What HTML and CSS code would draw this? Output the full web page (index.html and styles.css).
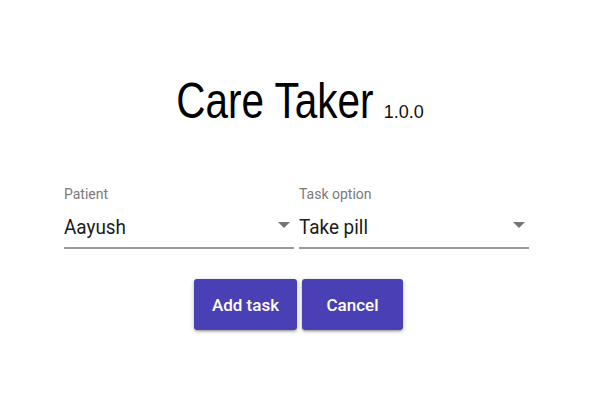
FILE: index.html
```html
<!DOCTYPE html>
<html>
<head>
<meta charset="utf-8">
<link rel="stylesheet" href="styles.css">
</head>
<body>
<div class="app">
  <h1 class="title"><span class="name">Care Taker</span><span class="version">1.0.0</span></h1>
  <div class="form">
    <div class="field field-patient">
      <label class="label">Patient</label>
      <div class="select">
        <span class="value">Aayush</span>
        <span class="arrow"></span>
      </div>
    </div>
    <div class="field field-task">
      <label class="label">Task option</label>
      <div class="select">
        <span class="value">Take pill</span>
        <span class="arrow"></span>
      </div>
    </div>
  </div>
  <div class="actions">
    <button class="btn btn-add">Add task</button>
    <button class="btn btn-cancel">Cancel</button>
  </div>
</div>
</body>
</html>
```
FILE: styles.css
```css
html, body {
  margin: 0;
  padding: 0;
  background: #ffffff;
}
body {
  width: 600px;
  height: 400px;
  font-family: Roboto, "Liberation Sans", sans-serif;
  color: #1a1a1a;
}
.app {
  padding-top: 72px;
}
.title {
  margin: 0;
  display: flex;
  justify-content: center;
  align-items: baseline;
  gap: 10px;
  font-weight: normal;
}
.name {
  display: inline-block;
  font-family: "Liberation Sans", Arial, sans-serif;
  font-size: 50px;
  line-height: 58px;
  color: #000;
  transform: scaleX(0.81);
  transform-origin: center;
  margin: 0 -23px;
}
.version {
  font-family: "Liberation Sans", Arial, sans-serif;
  font-size: 18px;
  color: #111;
}
.form {
  display: flex;
  gap: 5px;
  margin-left: 64px;
  margin-top: 56px;
}
.field {
  width: 230px;
  display: flex;
  flex-direction: column;
}
.label {
  font-size: 14px;
  line-height: 16px;
  color: #7a7a7a;
}
.select {
  display: flex;
  align-items: center;
  justify-content: space-between;
  height: 45px;
  border-bottom: 2px solid #9a9a9a;
}
.value {
  display: inline-block;
  font-size: 21px;
  color: #1b1b1b;
  padding-top: 5px;
  transform: scaleX(0.9);
  transform-origin: left center;
}
.arrow {
  width: 0;
  height: 0;
  border-left: 6px solid transparent;
  border-right: 6px solid transparent;
  border-top: 6px solid #757575;
  margin-right: 4px;
}
.actions {
  display: flex;
  justify-content: center;
  gap: 5px;
  margin-top: 30px;
  padding-right: 3px;
}
.btn {
  font-family: Roboto, "Liberation Sans", sans-serif;
  font-weight: 500;
  font-size: 17px;
  color: #ffffff;
  background: #4a40b6;
  border: none;
  border-radius: 3px;
  height: 51px;
  box-shadow: 0 1px 5px rgba(0,0,0,0.2), 0 2px 2px rgba(0,0,0,0.14), 0 3px 1px -2px rgba(0,0,0,0.12);
}
.btn-add {
  width: 103px;
}
.btn-cancel {
  width: 101px;
}
```
